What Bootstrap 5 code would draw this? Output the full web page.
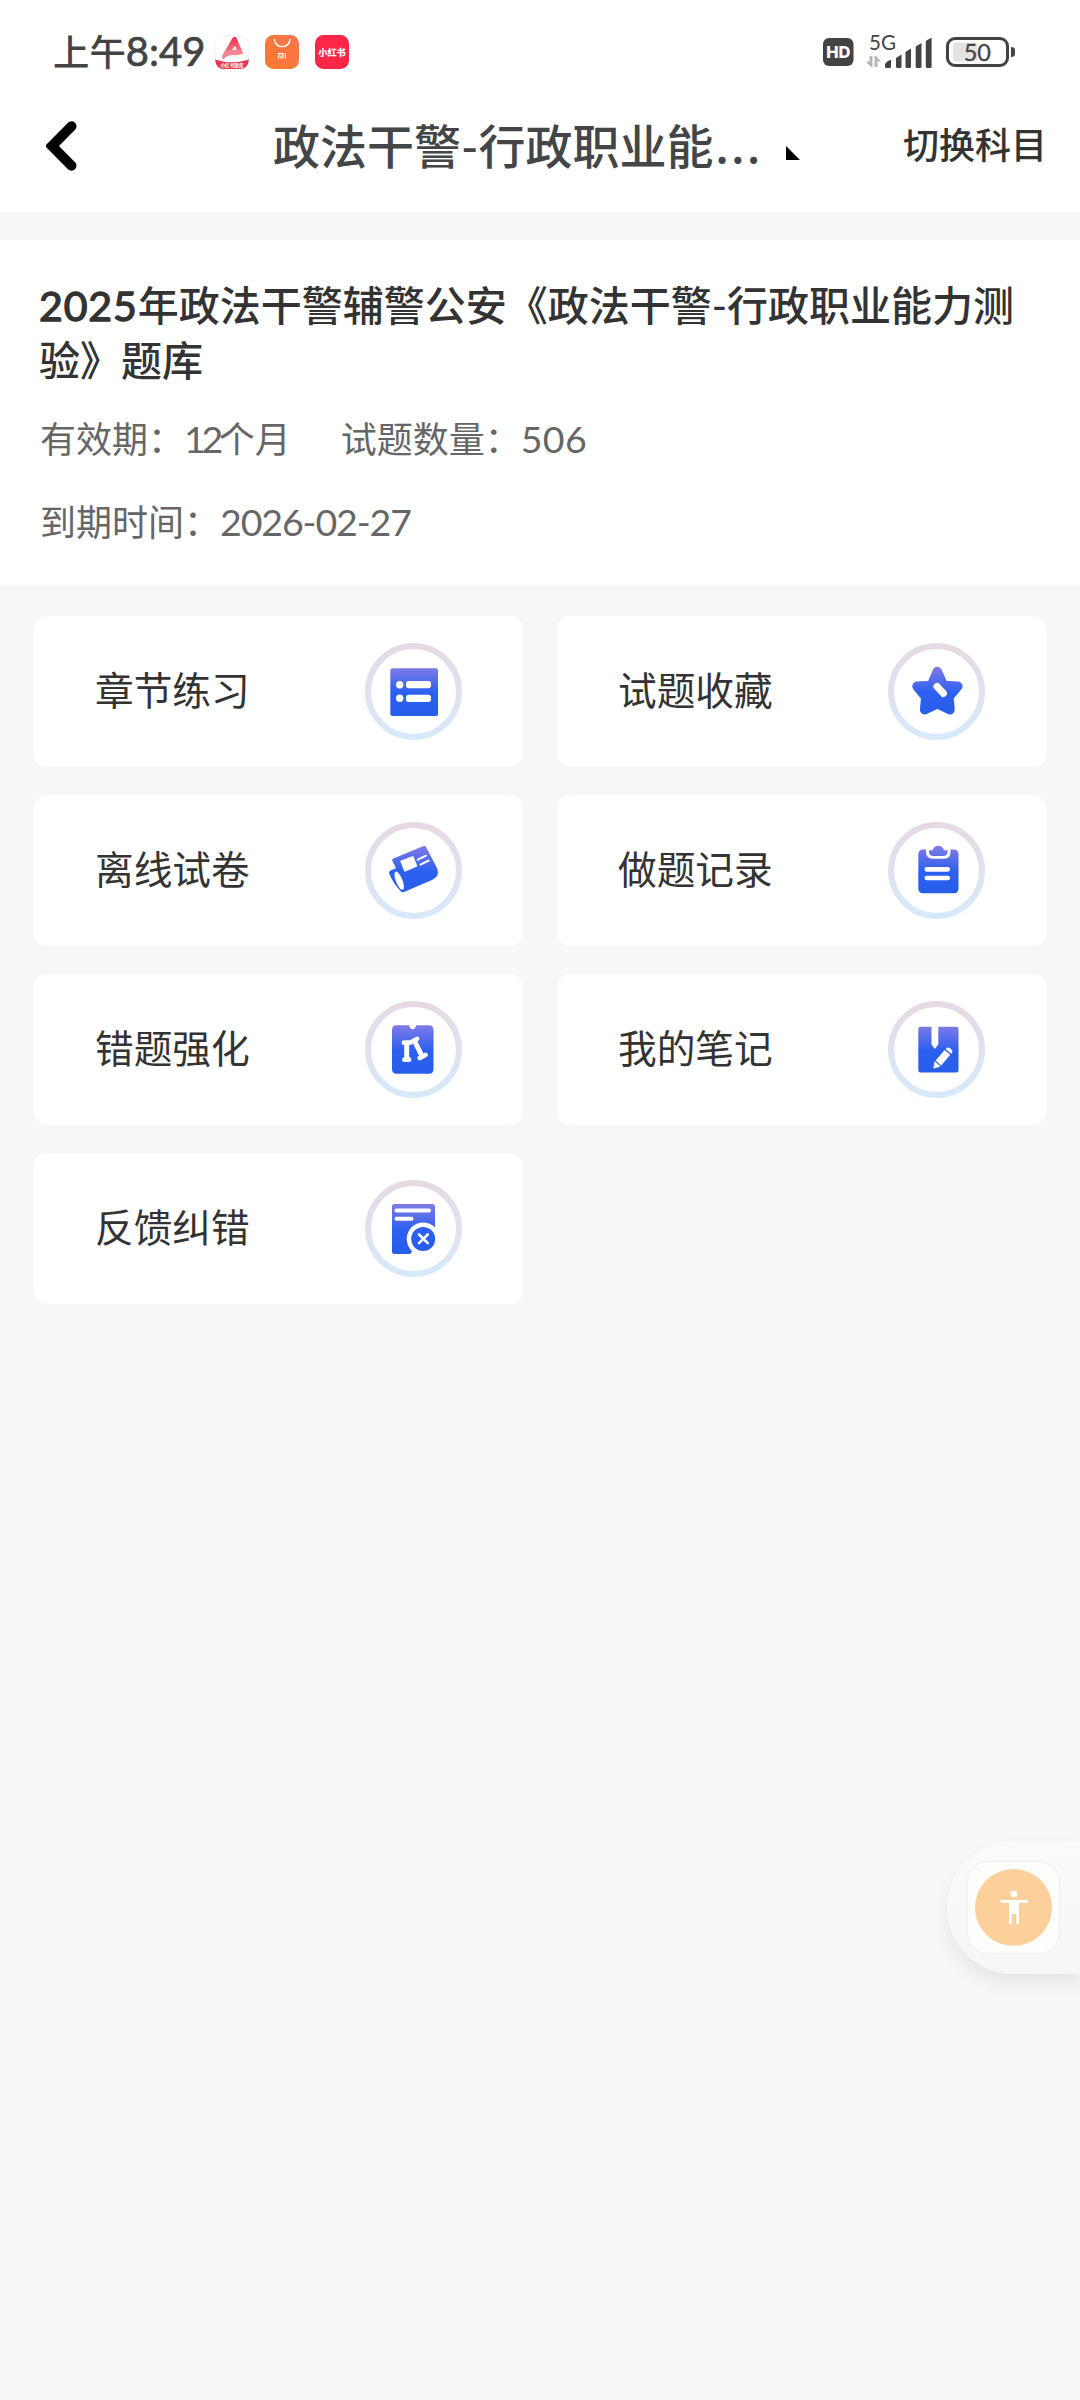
<!DOCTYPE html>
<html lang="zh-CN">
<head>
<meta charset="utf-8">
<meta name="viewport" content="width=device-width, initial-scale=1">
<title>题库</title>
<link href="https://cdn.jsdelivr.net/npm/bootstrap@5.3.0/dist/css/bootstrap.min.css" rel="stylesheet">
<style>
  body { background:#f7f7f5; font-family:"Lato","Noto Sans CJK SC",sans-serif; color:#333; min-height:2400px; overflow-x:hidden; }
  svg { display:block; flex:none; }
  .cjk { font-family:"Noto Sans CJK SC",sans-serif; }
  .top-area { height:212px; }
  .status-bar { height:104px; padding:0 64px 0 53px; color:#434343; }
  .clock { font-size:40px; line-height:48px; width:162px; padding-bottom:3px; -webkit-text-stroke:.7px #434343; }
  .clock .cjk { font-size:36.4px; -webkit-text-stroke:0; font-weight:500; }
  .app-icons { gap:16px; }
  .title-bar { height:84px; padding:0 33px 0 46px; }
  .page-title { font-size:47px; line-height:60px; color:#444547; font-weight:500; margin-left:195px; padding-bottom:1px; }
  .title-dots { letter-spacing:4.6px; margin-left:3px; font-family:"Lato",sans-serif; font-weight:700; }
  .caret-mark { margin:14px 0 0 22px; }
  .switch-link { font-size:36px; line-height:50px; font-weight:500; color:#333; padding-bottom:3px; }
  .info-panel { margin-top:28px; height:345px; padding:38px 39px 0; }
  .bank-name { font-size:41px; line-height:55px; font-weight:500; color:#333; }
  .bank-name .num { letter-spacing:.9px; font-weight:400; -webkit-text-stroke:1.3px #333; }
  .meta-line { font-size:36px; line-height:50px; color:#666; padding-left:1px; }
  .meta-line .num { font-size:37.5px; }
  .meta-line .num-month { letter-spacing:-4.2px; margin-right:-.5px; }
  .meta-line .num-count { letter-spacing:.4px; }
  .meta-line .num-date { letter-spacing:-1.1px; }
  .meta-first { margin-top:26px; gap:50px; }
  .meta-second { margin-top:33px; }
  .tile-area { padding:31px 34px 0; }
  .tile-area .row { --bs-gutter-x:34px; --bs-gutter-y:28px; }
  .tile { height:151px; border:0; border-radius:13px; padding:0 61px 0 61px; }
  .tile-label { font-size:38.7px; line-height:54px; color:#333; padding-bottom:3px; }
  .float-dock { position:fixed; right:0; top:1841px; width:133px; height:133px; padding-left:20px;
    border-radius:67px 0 0 67px; background:linear-gradient(#fbfbfa,#f6f6f5);
    box-shadow:0 10px 18px rgba(0,0,0,.07),0 0 3px rgba(0,0,0,.03); }
  .float-inner { width:93px; height:93px; border-radius:21px; background:#fdfdfb; border:1px solid #efefec; }
</style>
</head>
<body>
<svg width="0" height="0" class="position-absolute">
  <defs>
    <linearGradient id="ring" x1="0" y1="0" x2="0" y2="97" gradientUnits="userSpaceOnUse"><stop offset="0" stop-color="#e7d9e3"/><stop offset=".5" stop-color="#e0e1f1"/><stop offset="1" stop-color="#d5eafb"/></linearGradient>
    <linearGradient id="blue" x1="0" y1="24" x2="0" y2="73" gradientUnits="userSpaceOnUse"><stop offset="0" stop-color="#817be6"/><stop offset=".52" stop-color="#2c60f0"/><stop offset="1" stop-color="#285dea"/></linearGradient>
    <linearGradient id="mi" x1="1" y1="0" x2="0" y2="1"><stop offset="0" stop-color="#f8764f"/><stop offset="1" stop-color="#fb7a2c"/></linearGradient>
    <linearGradient id="rose" x1="0" y1="0" x2="0" y2="1"><stop offset="0" stop-color="#e8304f"/><stop offset="1" stop-color="#f8929c"/></linearGradient>
  </defs>
</svg>

<header class="top-area bg-white">
  <div class="status-bar d-flex align-items-center">
    <div class="clock text-nowrap"><span class="cjk">上午</span>8:49</div>
    <div class="app-icons d-flex">
      <svg width="34" height="34" viewBox="0 0 34 34">
        <rect x=".5" y=".5" width="33" height="33" rx="8.5" fill="#fff" stroke="#f4f2f2"/>
        <path d="M17.500 3Q20.500 0 22 4L28 18Q26 21 23 17L20 11L14 19Q10 24 7 21Z" fill="url(#rose)"/>
        <path d="M7 22Q10 15 17 15Q25 13.500 28 17.500Q25 21 18 20Q12 20 9 24Q7 25 7 22Z" fill="#f78592"/>
        <path d="M0 24.500Q17 30 34 24.500Q33 34 25 34H9Q1 34 0 24.500Z" fill="#e33853"/>
        <text x="17" y="32.400" font-size="4.600" text-anchor="middle" fill="#fff" font-family="Noto Sans CJK SC" font-weight="700">小红书题库</text>
      </svg>
      <svg width="34" height="34" viewBox="0 0 34 34">
        <rect width="34" height="34" rx="8.5" fill="url(#mi)"/>
        <path d="M9.500 4.500C10 14 24.500 14 25 4.500" fill="none" stroke="#fff" stroke-width="1.400" stroke-linecap="round"/>
        <path d="M13.700 23.500V18.700H18V23.500M16 20.500V23.500M20.400 18.300V23.500" fill="none" stroke="#fff" stroke-width="1.200"/>
      </svg>
      <svg width="34" height="34" viewBox="0 0 34 34">
        <rect width="34" height="34" rx="8.5" fill="#fc2746"/>
        <text x="17" y="20.800" font-size="9.200" text-anchor="middle" fill="#fff" font-family="Noto Sans CJK SC" font-weight="900">小红书</text>
      </svg>
    </div>
    <svg class="ms-auto" width="194" height="56" viewBox="822 24 194 56">
      <rect x="823" y="38" width="30.500" height="28" rx="6" fill="#434343"/>
      <text x="838.300" y="57.800" font-size="16.500" font-weight="800" text-anchor="middle" fill="#fff" font-family="Inter">HD</text>
      <text x="869" y="50.200" font-size="21" fill="#434343" font-family="Lato" textLength="27" lengthAdjust="spacingAndGlyphs">5G</text>
      <path d="M871 56V67L866 61.500H869.500V56ZM872.500 56H871V67H872.500ZM876 67V56L881 61.500H877.500V67ZM874.500 56H876V67H874.500Z" fill="#b5b5b5"/>
      <g fill="#434343"><path d="M885 66.500L885 64Q887 61 890 60H891V66.500Q891 68 889.500 68H886.500Q885 68 885 66.500Z"/>
      <path d="M896 58L901.500 54.500V66.500Q901.500 68 900 68H897.500Q896 68 896 66.500Z"/>
      <path d="M905.500 52L911 48.500V66.500Q911 68 909.500 68H907Q905.500 68 905.500 66.500Z"/>
      <path d="M915.700 46.500L921.500 43V66.500Q921.500 68 920 68H917.200Q915.700 68 915.700 66.500Z"/>
      <path d="M925.800 41L931.600 37.500V66.500Q931.600 68 930.100 68H927.300Q925.800 68 925.800 66.500Z"/></g>
      <rect x="953" y="42.500" width="24.500" height="19" rx="3" fill="#e3e3e3"/>
      <rect x="947.500" y="38.500" width="60" height="27" rx="7.500" fill="none" stroke="#434343" stroke-width="3"/>
      <path d="M1011 47Q1015 47 1015 50V54Q1015 57 1011 57Z" fill="#434343"/>
      <text x="977.300" y="61.200" font-size="23.500" text-anchor="middle" fill="#434343" stroke="#434343" stroke-width=".3" font-family="Lato">50</text>
    </svg>
  </div>
  <div class="title-bar d-flex align-items-center">
    <svg width="32" height="50" viewBox="0 0 32 50"><path d="M25.500 5.300L6 25L25.500 44.700" fill="none" stroke="#000" stroke-width="10" stroke-linecap="round" stroke-linejoin="miter"/></svg>
    <h1 class="page-title mb-0 text-nowrap">政法干警-行政职业能<span class="title-dots">...</span></h1>
    <svg class="caret-mark" width="14" height="14" viewBox="0 0 14 14"><path d="M0 0L14 14H0Z"/></svg>
    <a class="switch-link ms-auto text-decoration-none text-nowrap" href="#">切换科目</a>
  </div>
</header>

<main>
  <section class="info-panel bg-white">
    <h2 class="bank-name mb-0"><span class="num">2025</span>年政法干警辅警公安《政法干警-行政职业能力测验》题库</h2>
    <div class="meta-line meta-first d-flex text-nowrap"><div>有效期：<span class="num num-month">12</span>个月</div><div>试题数量：<span class="num num-count">506</span></div></div>
    <div class="meta-line meta-second text-nowrap">到期时间：<span class="num num-date">2026-02-27</span></div>
  </section>

  <section class="tile-area">
    <div class="row row-cols-2">
      <div class="col"><div class="card tile flex-row align-items-center justify-content-between"><span class="tile-label">章节练习</span>
        <svg width="97" height="97" viewBox="0 0 97 97"><circle cx="48.500" cy="48.500" r="45.500" fill="none" stroke="url(#ring)" stroke-width="6"/>
          <rect x="25.300" y="25.300" width="47.700" height="47.700" rx="2.500" fill="url(#blue)"/>
          <g fill="#fff"><circle cx="34.700" cy="41.700" r="3.700"/><circle cx="34.700" cy="55.300" r="3.700"/><rect x="41" y="38" width="25" height="7.300" rx="2.700"/><rect x="41" y="51.700" width="25" height="7.300" rx="2.700"/></g></svg></div></div>
      <div class="col"><div class="card tile flex-row align-items-center justify-content-between"><span class="tile-label">试题收藏</span>
        <svg width="97" height="97" viewBox="0 0 97 97"><circle cx="48.500" cy="48.500" r="45.500" fill="none" stroke="url(#ring)" stroke-width="6"/>
          <path d="M49.300 28.500L55.500 42.500L69.800 43.300L60.800 54L62 66.700L49.300 60.800L36.700 66.700L37.800 54L29 43.300L43.300 42.500Z" fill="url(#blue)" stroke="url(#blue)" stroke-width="9.500" stroke-linejoin="round"/>
          <path d="M49 43.500L55.500 50.500" stroke="#fff" stroke-width="7" stroke-linecap="round"/></svg></div></div>
      <div class="col"><div class="card tile flex-row align-items-center justify-content-between"><span class="tile-label">离线试卷</span>
        <svg width="97" height="97" viewBox="0 0 97 97"><circle cx="48.500" cy="48.500" r="45.500" fill="none" stroke="url(#ring)" stroke-width="6"/>
          <path d="M27 38Q27 37 28.500 36.400L58.500 24Q60.300 23.400 61 25L72 46Q75 54 68 57.500L39 70Q37 71 35.500 69Q28 61 24.300 52Q23.500 49.500 26 48.300L31 46.200Z" fill="url(#blue)"/>
          <ellipse cx="34.200" cy="58.700" rx="3.300" ry="9.700" transform="rotate(-22 34.200 58.700)" fill="#fff"/>
          <path d="M36.300 39.300L47.800 35L51.300 43.800L40 48.700Z" fill="#fff" stroke="#fff" stroke-width="1.800" stroke-linejoin="round"/>
          <path d="M52.800 37.700L61 33.700M55.500 42.600L63.700 38.500" stroke="#fff" stroke-width="2" stroke-linecap="round"/></svg></div></div>
      <div class="col"><div class="card tile flex-row align-items-center justify-content-between"><span class="tile-label">做题记录</span>
        <svg width="97" height="97" viewBox="0 0 97 97"><circle cx="48.500" cy="48.500" r="45.500" fill="none" stroke="url(#ring)" stroke-width="6"/>
          <rect x="30.300" y="27.500" width="40.200" height="43.700" rx="4.500" fill="url(#blue)"/>
          <path d="M38 25V30Q38 36.700 45 36.700H56Q62.500 36.700 62.500 30V25Z" fill="#fff"/>
          <path d="M41 28.200H44.500Q46 23.700 50.300 23.700Q54.500 23.700 56 28.200H59.500V29.500Q59.500 34 55 34H45.500Q41 34 41 29.500Z" fill="url(#blue)"/>
          <path d="M38.800 47.300H59.800M38.800 56H59.800" stroke="#fff" stroke-width="4.700" stroke-linecap="round"/></svg></div></div>
      <div class="col"><div class="card tile flex-row align-items-center justify-content-between"><span class="tile-label">错题强化</span>
        <svg width="97" height="97" viewBox="0 0 97 97"><circle cx="48.500" cy="48.500" r="45.500" fill="none" stroke="url(#ring)" stroke-width="6"/>
          <path d="M31.500 24.300H44Q45 28.300 47.600 28.300Q50.200 28.300 51.200 24.300H64Q68.500 24.300 68.500 29V68Q68.500 72.700 64 72.700H31.500Q27 72.700 27 68V29Q27 24.300 31.500 24.300Z" fill="url(#blue)"/>
          <g stroke="#fff" stroke-linecap="round" fill="none"><path d="M41.700 42V58M49.500 40L57.500 56" stroke-width="5" stroke-linecap="butt"/><path d="M39 41.700H44.500M39.500 58.700H44M46.500 41L52 38M54.800 57L60.500 54" stroke-width="4.800"/></g></svg></div></div>
      <div class="col"><div class="card tile flex-row align-items-center justify-content-between"><span class="tile-label">我的笔记</span>
        <svg width="97" height="97" viewBox="0 0 97 97"><circle cx="48.500" cy="48.500" r="45.500" fill="none" stroke="url(#ring)" stroke-width="6"/>
          <rect x="30.300" y="25.700" width="40.200" height="45.700" rx="2.500" fill="url(#blue)"/>
          <path d="M43.500 25H50.300V43.500L46.900 48L43.500 43.500Z" fill="#fff"/>
          <g transform="translate(45.800 67.200) rotate(-49)" fill="#fff"><path d="M0 0L5.500 -3.500V3.500Z" stroke="#fff" stroke-width=".6"/><rect x="6.900" y="-3.700" width="14" height="7.400"/><path d="M22.300 -3.700H23Q25.800 -3.700 25.800 0Q25.800 3.700 23 3.700H22.300Z"/></g></svg></div></div>
      <div class="col"><div class="card tile flex-row align-items-center justify-content-between"><span class="tile-label">反馈纠错</span>
        <svg width="97" height="97" viewBox="0 0 97 97"><circle cx="48.500" cy="48.500" r="45.500" fill="none" stroke="url(#ring)" stroke-width="6"/>
          <path d="M29.500 24H67.500Q70 24 70 26.500V50L50 60L47 71Q46.500 74 44 74H29.500Q27 74 27 71.500V26.500Q27 24 29.500 24Z" fill="url(#blue)"/>
          <circle cx="58.200" cy="59" r="16.500" fill="#fff"/><circle cx="58.200" cy="59" r="12" fill="url(#blue)"/>
          <path d="M31.500 30.500H64M31.500 38.700H46.500" stroke="#fff" stroke-width="4" stroke-linecap="round"/>
          <path d="M54 54.500L62.800 63.200M62.800 54.500L54 63.200" stroke="#fff" stroke-width="2.600" stroke-linecap="round"/></svg></div></div>
    </div>
  </section>
</main>

<aside class="float-dock d-flex align-items-center">
  <div class="float-inner d-flex align-items-center justify-content-center">
    <svg width="77" height="77" viewBox="0 0 77 77"><circle cx="38.500" cy="38.500" r="38.500" fill="#fbd09a"/>
      <g fill="#fff"><circle cx="39" cy="25" r="3.300"/><path d="M25.300 31H52.700V33.700H44V55H41.300V45H36.700V55H34V33.700H25.300Z"/></g></svg>
  </div>
</aside>
<script src="https://cdn.jsdelivr.net/npm/bootstrap@5.3.0/dist/js/bootstrap.bundle.min.js"></script>
</body>
</html>
